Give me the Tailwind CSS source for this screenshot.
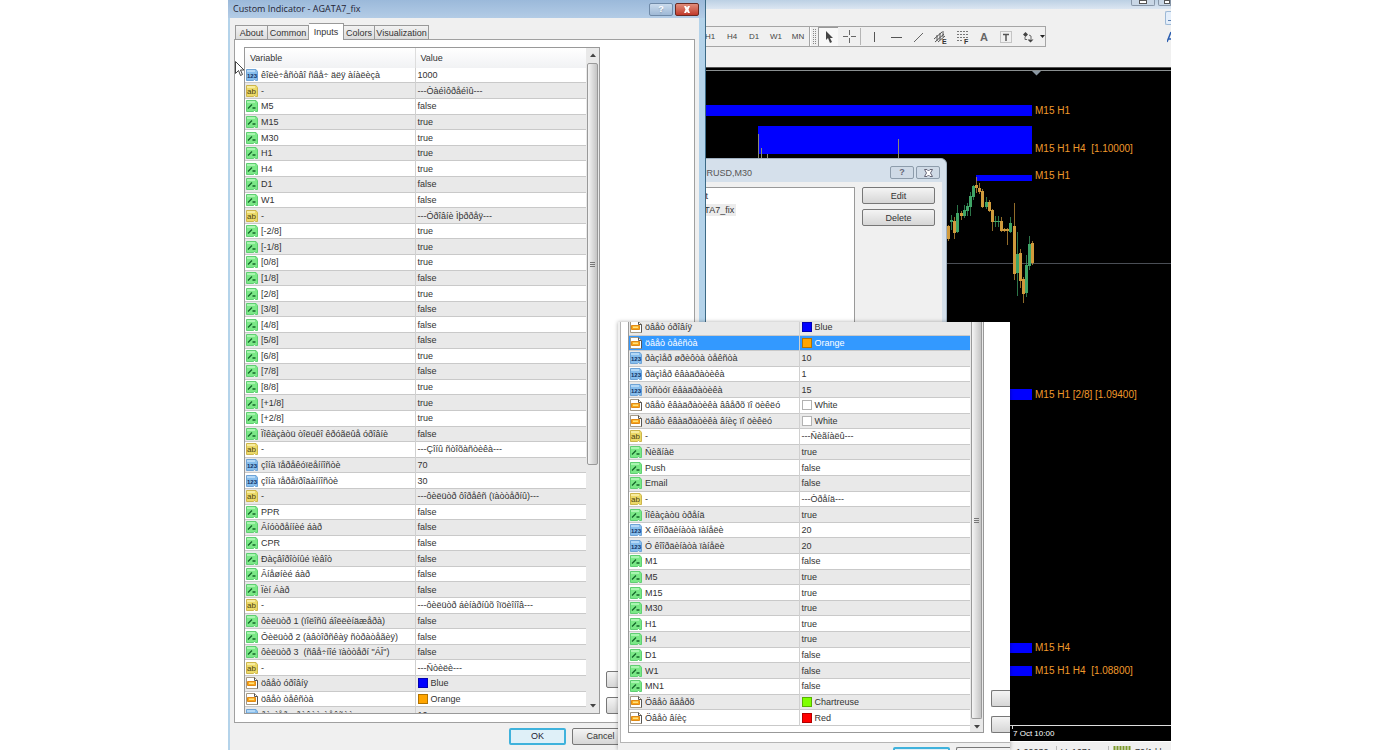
<!DOCTYPE html>
<html lang="en">
<head>
  <meta charset="UTF-8" />
  <title>Custom Indicator - AGATA7_fix</title>
  <script src="https://cdn.jsdelivr.net/npm/@tailwindcss/browser@4"></script>
  <style>
    body { font-family: "Liberation Sans", Arial, sans-serif; }
  </style>
</head>
<body class="bg-white text-[9px] leading-3 text-[#333]">

<!-- icon set -->
<svg class="hidden">
  <symbol id="ico-int" viewBox="0 0 12 12">
    <path d="M.5 .5h9.500l1.500 2v9H9.500l-1-1-1 1H.5z" fill="#86bdec" stroke="#6ea3d6" />
    <path d="M1 1h8v2H1z" fill="#b4d8f6" />
    <text x="1" y="9" font-size="6" font-weight="bold" fill="#0c2f63">123</text>
  </symbol>
  <symbol id="ico-str" viewBox="0 0 12 12">
    <path d="M.5 .5h9.500l1.500 2v9H9.500l-1-1-1 1H.5z" fill="#ecd968" stroke="#cdb64c" />
    <path d="M1 1h8v2H1z" fill="#f7ec9f" />
    <text x="1" y="9" font-size="8" fill="#4b4210">ab</text>
  </symbol>
  <symbol id="ico-bool" viewBox="0 0 12 12">
    <path d="M.5 .5h9.500l1.500 2v9H9.500l-1-1-1 1H.5z" fill="#7be887" stroke="#5fcf72" />
    <path d="M1 1h8v2H1z" fill="#a9f5b0" />
    <path d="M2 8.500L6 4.500M6.500 8h3" stroke="#14662a" stroke-width="1.300" fill="none" />
  </symbol>
  <symbol id="ico-color" viewBox="0 0 12 12">
    <path d="M.5 .5h8l3 3v8H.5z" fill="#fff" stroke="#a59a86" />
    <path d="M8.500 .5v3h3v8" fill="none" stroke="#555" />
    <path d="M1.500 4.500h8v4h-8z" fill="#f9a61c" stroke="#e08a14" />
    <path d="M3 5.500h5v1.500H3z" fill="#ffe27a" />
  </symbol>
</svg>

<div class="relative mr-[229px] ml-[228px] h-screen overflow-hidden">

  <!-- terminal window -->
  <main class="flex h-full flex-col bg-[#f0f0f0]">
    <div class="flex h-[9px] shrink-0 items-start justify-end gap-[3px] bg-linear-to-b from-[#bcd0e4] to-[#dbe6f1]">
      <button aria-label="Minimize" class="flex h-[6px] w-6 justify-center rounded-b-xs border border-t-0 border-[#8796a8] bg-[#c9d7e6]"><span class="h-[4px] w-2 border border-[#555] bg-white"></span></button>
      <button aria-label="Restore" class="flex h-[6px] w-[13px] justify-end rounded-bl-xs border border-t-0 border-[#8796a8] bg-[#c9d7e6]"><span class="h-[4px] w-[6px] border border-[#555] bg-white"></span></button>
    </div>
    <div class="flex h-[17px] shrink-0 items-center justify-end">
      <button aria-label="Restore chart" class="flex h-[14px] w-[6px] items-end justify-end rounded-l-xs border border-r-0 border-[#9db9d6] bg-[#e4eefa] pb-[3px]"><span class="h-px w-[3px] bg-[#5b7fb0]"></span></button>
    </div>
    <div class="flex h-[21px] shrink-0 items-center justify-between">
      <div class="flex h-full w-[818px] items-center border-y border-r border-[#a5a5a5] pl-[471px] text-[8px] text-[#444]">
        <button class="w-[22px] shrink-0">H1</button>
        <button class="w-[22px] shrink-0">H4</button>
        <button class="w-[22px] shrink-0">D1</button>
        <button class="w-[22px] shrink-0">W1</button>
        <button class="w-[22px] shrink-0">MN</button>
        <span class="h-full w-[2px] shrink-0 border-l border-[#a5a5a5] bg-white"></span>
        <span class="mx-[2px] h-[15px] w-[3px] shrink-0 border-x border-dotted border-[#888]"></span>
        <button aria-label="Cursor" class="flex h-full w-5 shrink-0 items-center justify-center border-t border-l border-[#999] bg-[#f8f8f8]">
          <svg width="8" height="12" viewBox="0 0 8 12"><path d="M1 0v9l2-2 2 5 2-1-2-4h3z" fill="#444" /></svg>
        </button>
        <button aria-label="Crosshair" class="flex w-[22px] shrink-0 justify-center">
          <svg width="13" height="13" viewBox="0 0 13 13"><path d="M6.500 0v5M6.500 8v5M0 6.500h5M8 6.500h5" stroke="#666" /></svg>
        </button>
        <span class="h-[17px] w-[3px] shrink-0 border-l border-[#b5b5b5]"></span>
        <button aria-label="Vertical line" class="flex w-[22px] shrink-0 justify-center">
          <svg width="11" height="12" viewBox="0 0 11 12"><path d="M5.500 1v10" stroke="#555" /></svg>
        </button>
        <button aria-label="Horizontal line" class="flex w-[22px] shrink-0 justify-center">
          <svg width="11" height="12" viewBox="0 0 11 12"><path d="M0 6.500h11" stroke="#555" /></svg>
        </button>
        <button aria-label="Trendline" class="flex w-[22px] shrink-0 justify-center">
          <svg width="11" height="12" viewBox="0 0 11 12"><path d="M1 11L10 2" stroke="#666" /></svg>
        </button>
        <button aria-label="Equidistant channel" class="flex w-[22px] shrink-0 justify-center">
          <svg width="13" height="14" viewBox="0 0 13 14"><path d="M0 9l8-7M1 12l9-8M4 12l7-6M3 5v6M6 3v7M9 1v6" stroke="#555" /><text x="8" y="14" font-size="7" font-weight="bold" fill="#333">E</text></svg>
        </button>
        <button aria-label="Fibonacci retracement" class="flex w-[22px] shrink-0 justify-center">
          <svg width="13" height="14" viewBox="0 0 13 14"><path d="M1 1.500h11M1 4.500h11M1 7.500h11M1 10.500h6" stroke="#777" stroke-dasharray="2 1" /><text x="8" y="14" font-size="7" font-weight="bold" fill="#333">F</text></svg>
        </button>
        <button class="w-[22px] shrink-0 text-[11px] font-bold text-[#666]">A</button>
        <button aria-label="Text label" class="flex w-[22px] shrink-0 justify-center">
          <svg width="12" height="12" viewBox="0 0 12 12"><path d="M.5 .5h11v11H.5z" fill="none" stroke="#999" stroke-dasharray="1 1" /><path d="M3 3.500h6M6 3v7" stroke="#555" stroke-width="1.500" /></svg>
        </button>
        <button aria-label="Arrows" class="flex w-[22px] shrink-0 justify-center">
          <svg width="12" height="12" viewBox="0 0 12 12"><path d="M3.500 1L6 3.500 3.500 6 1 3.500zM8.500 11.500L5.500 8.500h6z" fill="#444" /><path d="M3 6v2.500h2M7 4l2 1v3" stroke="#666" fill="none" /></svg>
        </button>
        <svg class="shrink-0" width="7" height="4" viewBox="0 0 7 4"><path d="M1 0h5L3.500 3z" fill="#222" /></svg>
      </div>
      <svg width="4" height="12" viewBox="0 0 4 12"><path d="M0 11L4 1M1 8h3" stroke="#2a5db0" stroke-width="1.500" /></svg>
    </div>
    <div class="h-[20px] shrink-0"></div>

    <!-- chart -->
    <div class="min-h-0 flex-1 overflow-hidden bg-black">
      <svg width="943" height="674" viewBox="228 67 943 674" font-size="10" fill="#f09a2c">
        <path d="M228 67.500h943" stroke="#555" />
        <path d="M228 70.500h943" stroke="#8a8f90" />
        <path d="M1032 71h9l-4.500 4.500z" fill="#8b98a3" />
        <g fill="#0000ff">
          <rect x="700" y="105" width="332" height="11" />
          <rect x="758" y="126" width="274" height="28" />
          <rect x="976" y="175" width="56" height="6" />
          <rect x="1000" y="389" width="32" height="11" />
          <rect x="1000" y="643" width="32" height="10" />
          <rect x="1000" y="666" width="32" height="10" />
        </g>
        <path d="M758.500 134v26M761.500 148v12M767.500 154v6M898.500 139v20" stroke="#8a8a70" />
        <path d="M940 263.500h231" stroke="#4a4e55" />
        <g id="candles"></g>
        <text x="1035" y="114">M15 H1</text>
        <text x="1035" y="152">M15 H1 H4 &#160;[1.10000]</text>
        <text x="1035" y="179">M15 H1</text>
        <text x="1035" y="398">M15 H1 [2/8] [1.09400]</text>
        <text x="1035" y="651">M15 H4</text>
        <text x="1035" y="674">M15 H1 H4 &#160;[1.08800]</text>
        <path d="M1000 725.500h171M1012.500 726v3" stroke="#ddd" />
        <text x="1013" y="736" font-size="8" fill="#fff">7 Oct 10:00</text>
      </svg>
    </div>
    <footer class="flex h-[9px] shrink-0 items-start overflow-hidden border-t border-white pt-[4px] pl-[788px]">
      <span class="w-[40px] shrink-0">1.09030</span>
      <span class="w-[52px] shrink-0 border-l border-[#bbb] pl-1">V: 1671</span>
      <span class="flex shrink-0 gap-1 border-l border-[#bbb] pl-1">
        <svg width="18" height="8" viewBox="0 0 18 8"><path d="M1.500 0v8M4.500 0v8M7.500 0v8M10.500 0v8M13.500 0v8M16.500 0v8" stroke="#7d9a2c" stroke-width="2" /></svg>
        70/1 kb
      </span>
    </footer>
  </main>

  <!-- indicators list dialog -->
  <section class="absolute top-[158px] left-[440px] flex h-[300px] w-[279px] flex-col rounded-t-md border border-[#9fb0c0] bg-[#d5e0eb] pr-[4px]">
    <header class="flex h-[23px] shrink-0 items-center gap-[2px] pr-[2px] pl-[25px]">
      <h2 class="flex-1 pt-[4px] text-[#555]">EURUSD,M30</h2>
      <button class="mt-[4px] h-[13px] w-6 rounded-xs border border-[#8d9cab] bg-[#cfdae6] text-[9px] leading-none font-bold text-[#667]">?</button>
      <button aria-label="Close" class="mt-[4px] flex h-[13px] w-6 items-center justify-center rounded-xs border border-[#8d9cab] bg-[#cfdae6]">
        <svg width="9" height="8" viewBox="0 0 9 8"><path d="M.5 .5h2.500l1.500 1.500L6 .5h2.500L6.500 4l2 3.500H6L4.500 6 3 7.500H.5l2-3.500z" fill="#fff" stroke="#667" /></svg>
      </button>
    </header>
    <div class="flex flex-1 gap-[7px] bg-[#f0f0f0] pt-[5px] pr-[7px]">
      <ul class="flex-1 border border-[#999] bg-white pt-[2px] pl-[16px]">
        <li class="h-[14px]">Chart</li>
        <li class="flex"><span class="bg-[#ececec] pr-[2px]">AGATA7_fix</span></li>
      </ul>
      <div class="flex w-[73px] flex-col gap-[5px]">
        <button class="h-[17px] rounded-xs border border-[#777] bg-linear-to-b from-[#f4f4f4] to-[#d6d6d6]">Edit</button>
        <button class="h-[17px] rounded-xs border border-[#777] bg-linear-to-b from-[#f4f4f4] to-[#d6d6d6]">Delete</button>
      </div>
    </div>
  </section>

  <!-- indicator properties dialog -->
  <section class="absolute top-0 bottom-0 left-0 flex w-[478px] flex-col border-r border-[#3c6a86] bg-[#b4d3ea]">
    <header class="flex h-[18px] shrink-0 items-center gap-[2px] bg-linear-to-b from-[#9bb9da] to-[#b3cce6] pr-[6px] pl-[5px]">
      <h1 class="flex-1 font-['Open_Sans',sans-serif] text-[#223]">Custom Indicator - AGATA7_fix</h1>
      <button class="h-[13px] w-6 rounded-xs border border-[#6f8aa8] bg-linear-to-b from-[#c9daec] to-[#9fb9d6] text-[9px] leading-none font-bold text-white text-shadow-sm">?</button>
      <button aria-label="Close" class="flex h-[13px] w-6 items-center justify-center rounded-xs border border-[#6a2a22] bg-linear-to-b from-[#e08c7b] to-[#c0382a]">
        <svg width="8" height="7" viewBox="0 0 8 7"><path d="M1 0h2l1 1.500L5 0h2L5.500 3.500 7 7H5L4 5.500 3 7H1l1.500-3.500z" fill="#fff" /></svg>
      </button>
    </header>
    <div class="mr-[6px] ml-[2px] flex min-h-0 flex-1 flex-col bg-[#f0f0f0] px-[4px] pt-[5px]">
      <nav class="relative z-10 -mb-px flex h-[17px] shrink-0 items-end pl-px">
        <button class="h-[15px] w-[33px] border border-[#999] bg-linear-to-b from-[#f2f2f2] to-[#dcdcdc]">About</button>
        <button class="h-[15px] w-[41px] border border-l-0 border-[#999] bg-linear-to-b from-[#f2f2f2] to-[#dcdcdc]">Common</button>
        <button class="h-[17px] w-[35px] border border-b-0 border-l-0 border-[#999] bg-white">Inputs</button>
        <button class="h-[15px] w-[31px] border border-l-0 border-[#999] bg-linear-to-b from-[#f2f2f2] to-[#dcdcdc]">Colors</button>
        <button class="h-[15px] w-[54px] border border-l-0 border-[#999] bg-linear-to-b from-[#f2f2f2] to-[#dcdcdc]">Visualization</button>
      </nav>
      <div class="flex min-h-0 flex-1 gap-[6px] border border-[#a0a0a0] bg-white pt-[7px] pb-[8px] pl-[9px]">
        <div class="flex w-[356px] shrink-0 overflow-hidden border border-[#999]">
          <table class="h-[675px] w-[341px] shrink-0 table-fixed border-collapse text-left">
            <thead>
              <tr class="h-[20px] bg-linear-to-b from-white to-[#f1f2f4]">
                <th class="w-[170px] border-r border-[#ddd] p-0 pl-[5px] font-normal">Variable</th>
                <th class="p-0 pl-[5px] font-normal">Value</th>
              </tr>
            </thead>
            <tbody id="inputsTop"></tbody>
          </table>
          <div class="flex flex-1 flex-col items-center bg-[#e9e9e9]">
            <svg class="h-[15px] shrink-0" width="6" height="15" viewBox="0 0 6 15"><path d="M0 9h6L3 5.500z" fill="#444" /></svg>
            <div class="flex h-[402px] w-[11px] shrink-0 flex-col items-center justify-center gap-px rounded-xs border border-[#999] bg-linear-to-r from-[#f5f5f5] to-[#c4c4c4]">
              <span class="h-px w-[5px] bg-[#777]"></span><span class="h-px w-[5px] bg-[#777]"></span><span class="h-px w-[5px] bg-[#777]"></span>
            </div>
            <svg class="mt-auto shrink-0" width="6" height="15" viewBox="0 0 6 15"><path d="M0 6h6L3 9.500z" fill="#444" /></svg>
          </div>
        </div>
        <div class="flex flex-1 flex-col justify-end gap-[9px]">
          <button aria-label="Load" class="h-[17px] w-[73px] rounded-xs border border-[#777] bg-linear-to-b from-[#f4f4f4] to-[#d6d6d6]"></button>
          <button aria-label="Save" class="h-[17px] w-[73px] rounded-xs border border-[#777] bg-linear-to-b from-[#f4f4f4] to-[#d6d6d6]"></button>
        </div>
      </div>
      <div class="flex h-[27px] shrink-0 items-start gap-[6px] pt-[5px] pl-[275px]">
        <button class="h-[17px] w-[57px] shrink-0 rounded-xs border-2 border-[#3fb2dc] bg-[#dff0f8] leading-none text-[#223]">OK</button>
        <button class="h-[17px] w-[57px] shrink-0 rounded-xs border border-[#777] bg-linear-to-b from-[#f4f4f4] to-[#d6d6d6] leading-none">Cancel</button>
      </div>
    </div>
  </section>

  <!-- mouse pointer -->
  <svg class="absolute top-[61px] left-[7px]" width="10" height="16" viewBox="0 0 10 16"><path d="M.5 .5v12l3-3 2 5 2-1-2-4.500H9z" fill="#fff" stroke="#444" /></svg>

  <!-- lower part of the same dialog, scrolled to the end -->
  <section class="absolute top-[322px] bottom-0 left-[390px] flex w-[392px] flex-col bg-[#f0f0f0] shadow-[0_0_4px_#0005]">
    <div class="ml-[2px] flex min-h-0 flex-1 gap-[7px] border-b border-l border-[#b5b5b5] bg-white pb-[9px] pl-[7px]">
      <div class="flex w-[356px] shrink-0 overflow-hidden border border-t-0 border-[#999]">
        <div class="flex w-[341px] flex-col justify-end overflow-hidden pb-[6px]">
          <table class="h-[406px] w-full shrink-0 table-fixed border-collapse text-left">
            <colgroup><col class="w-[170px]"><col></colgroup>
            <tbody id="inputsBottom"></tbody>
          </table>
        </div>
        <div class="flex flex-1 flex-col items-center bg-[#e9e9e9]">
          <div class="flex h-[397px] w-[11px] shrink-0 flex-col items-center justify-center gap-px rounded-b-xs border border-t-0 border-[#999] bg-linear-to-r from-[#f5f5f5] to-[#c4c4c4]">
            <span class="h-px w-[5px] bg-[#777]"></span><span class="h-px w-[5px] bg-[#777]"></span><span class="h-px w-[5px] bg-[#777]"></span>
          </div>
          <svg class="mt-auto shrink-0" width="6" height="15" viewBox="0 0 6 15"><path d="M0 6h6L3 9.500z" fill="#444" /></svg>
        </div>
      </div>
      <div class="flex flex-1 flex-col justify-end gap-[9px]">
        <button aria-label="Load" class="h-[17px] rounded-l-xs border border-r-0 border-[#777] bg-linear-to-b from-[#f4f4f4] to-[#d6d6d6]"></button>
        <button aria-label="Save" class="h-[17px] rounded-l-xs border border-r-0 border-[#777] bg-linear-to-b from-[#f4f4f4] to-[#d6d6d6]"></button>
      </div>
    </div>
    <div class="flex h-[7px] shrink-0 gap-[6px] overflow-hidden pt-[4px] pl-[275px]">
      <button aria-label="OK" class="h-[17px] w-[57px] shrink-0 rounded-xs border-2 border-[#3fb2dc] bg-[#dff0f8]"></button>
      <button aria-label="Cancel" class="h-[17px] flex-1 rounded-l-xs border border-r-0 border-[#777] bg-[#f4f4f4]"></button>
    </div>
  </section>
</div>

<script>
  // [type, name, value]
  const inputsTop = [
    ["int", "êîëè÷åñòâî ñâå÷ äëÿ àíàëèçà", "1000"],
    ["str", "-", "---Òàéìôðåéìû---"],
    ["bool", "M5", "false"],
    ["bool", "M15", "true"],
    ["bool", "M30", "true"],
    ["bool", "H1", "true"],
    ["bool", "H4", "true"],
    ["bool", "D1", "false"],
    ["bool", "W1", "false"],
    ["str", "-", "---Óðîâíè Ìþððåÿ---"],
    ["bool", "[-2/8]", "true"],
    ["bool", "[-1/8]", "true"],
    ["bool", "[0/8]", "true"],
    ["bool", "[1/8]", "false"],
    ["bool", "[2/8]", "true"],
    ["bool", "[3/8]", "false"],
    ["bool", "[4/8]", "false"],
    ["bool", "[5/8]", "false"],
    ["bool", "[6/8]", "true"],
    ["bool", "[7/8]", "false"],
    ["bool", "[8/8]", "true"],
    ["bool", "[+1/8]", "true"],
    ["bool", "[+2/8]", "true"],
    ["bool", "Ïîêàçàòü òîëüêî êðóãëûå óðîâíè", "false"],
    ["str", "-", "---Çîíû ñòîõàñòèêà---"],
    ["int", "çîíà ïåðåêóïëåííîñòè", "70"],
    ["int", "çîíà ïåðåïðîäàííîñòè", "30"],
    ["str", "-", "---ôèëüòð ôîðåêñ (ïàòòåðíû)---"],
    ["bool", "PPR", "false"],
    ["bool", "Âíóòðåííèé áàð", "false"],
    ["bool", "CPR", "false"],
    ["bool", "Ðàçâîðîòíûé ïèâîò", "false"],
    ["bool", "Âíåøíèé áàð", "false"],
    ["bool", "Ïèí Áàð", "false"],
    ["str", "-", "---ôèëüòð áèíàðíûõ îïöèîíîâ---"],
    ["bool", "ôèëüòð 1 (ïîëîñû áîëëèíäæåðà)", "false"],
    ["bool", "Ôèëüòð 2 (àâòîðñêàÿ ñòðàòåãèÿ)", "false"],
    ["bool", "ôèëüòð 3&nbsp; (ñâå÷íîé ïàòòåðí \"ÁÎ\")", "false"],
    ["str", "-", "---Ñòèëè---"],
    ["color", "öâåò óðîâíÿ", "Blue", "#0000ff"],
    ["color", "öâåò òåêñòà", "Orange", "#ffa500"],
    ["int", "ðàçìåð øðèôòà òåêñòà", "10"],
  ];

  const inputsBottom = [
    ["color", "öâåò óðîâíÿ", "Blue", "#0000ff"],
    ["color", "öâåò òåêñòà", "Orange", "#ffa500"],
    ["int", "ðàçìåð øðèôòà òåêñòà", "10"],
    ["int", "ðàçìåð êâàäðàòèêà", "1"],
    ["int", "îòñòóï êâàäðàòèêà", "15"],
    ["color", "öâåò êâàäðàòèêà ââåðõ ïî öèêëó", "White", "#ffffff"],
    ["color", "öâåò êâàäðàòèêà âíèç ïî öèêëó", "White", "#ffffff"],
    ["str", "-", "---Ñèãíàëû---"],
    ["bool", "Ñèãíàë", "true"],
    ["bool", "Push", "false"],
    ["bool", "Email", "false"],
    ["str", "-", "---Òðåíä---"],
    ["bool", "Ïîêàçàòü òðåíä", "true"],
    ["int", "X êîîðäèíàòà ïàíåëè", "20"],
    ["int", "Ó êîîðäèíàòà ïàíåëè", "20"],
    ["bool", "M1", "false"],
    ["bool", "M5", "true"],
    ["bool", "M15", "true"],
    ["bool", "M30", "true"],
    ["bool", "H1", "true"],
    ["bool", "H4", "true"],
    ["bool", "D1", "false"],
    ["bool", "W1", "false"],
    ["bool", "MN1", "false"],
    ["color", "Öâåò ââåðõ", "Chartreuse", "#7fff00"],
    ["color", "Öâåò âíèç", "Red", "#ff0000"],
  ];

  function renderRows(id, rows, grayRow, selected) {
    document.getElementById(id).innerHTML = rows.map(([type, name, value, color], i) => {
      let bg = i % 2 === grayRow ? "bg-[#e9e9e9]" : "bg-white";
      if (i === selected) bg = "bg-[#3399ff] text-white";
      const swatch = color ? `<span class="h-[10px] w-[10px] border border-black/30" style="background:${color}"></span>` : "";
      return `
        <tr class="border-b border-[#c9c9c9] ${bg}">
          <td class="border-r border-[#d0d0d0] p-0 pl-px">
            <div class="flex items-center gap-[3px] whitespace-nowrap">
              <svg width="12" height="12" class="shrink-0"><use href="#ico-${type}" /></svg>${name}
            </div>
          </td>
          <td class="p-0 pl-[2px]"><div class="flex items-center gap-[3px] whitespace-nowrap">${swatch}${value}</div></td>
        </tr>`;
    }).join("");
  }

  renderRows("inputsTop", inputsTop, 1);
  renderRows("inputsBottom", inputsBottom, 0, 1);

  // [x, high, low, body top, body bottom, up]
  const candles = [
    [948, 225, 241, 226, 239, 0], [951, 215, 230, 220, 222, 1], [954, 217, 239, 221, 233, 0],
    [957, 205, 233, 213, 232, 1], [961, 211, 220, 213, 216, 0], [964, 205, 218, 210, 216, 1],
    [967, 203, 216, 206, 211, 1], [970, 192, 216, 196, 207, 1], [973, 185, 200, 186, 197, 1],
    [976, 177, 193, 185, 188, 0], [979, 183, 194, 188, 192, 0], [982, 189, 208, 191, 207, 0],
    [986, 197, 209, 202, 207, 1], [989, 200, 212, 202, 211, 0], [992, 209, 231, 210, 222, 0],
    [995, 216, 227, 221, 222, 1], [998, 216, 227, 221, 222, 1], [1001, 217, 232, 221, 231, 0],
    [1004, 228, 232, 229, 231, 0], [1007, 228, 245, 229, 231, 0], [1010, 217, 233, 223, 232, 1],
    [1014, 203, 280, 226, 274, 0], [1017, 232, 296, 254, 273, 1], [1020, 249, 288, 253, 281, 0],
    [1023, 277, 303, 279, 294, 0], [1026, 255, 297, 265, 293, 1], [1029, 236, 270, 244, 266, 1],
    [1032, 241, 265, 243, 263, 0],
  ];
  document.getElementById("candles").innerHTML = candles.map(([x, hi, lo, top, bottom, up]) => {
    const fill = up ? "#3fa566" : "#d09a3c";
    return `<rect x="${x}" y="${hi}" width="1" height="${lo - hi}" fill="${fill}" opacity="0.7" />
      <rect x="${x - 1}" y="${top}" width="3" height="${bottom - top}" fill="${fill}" />`;
  }).join("");
</script>
</body>
</html>
